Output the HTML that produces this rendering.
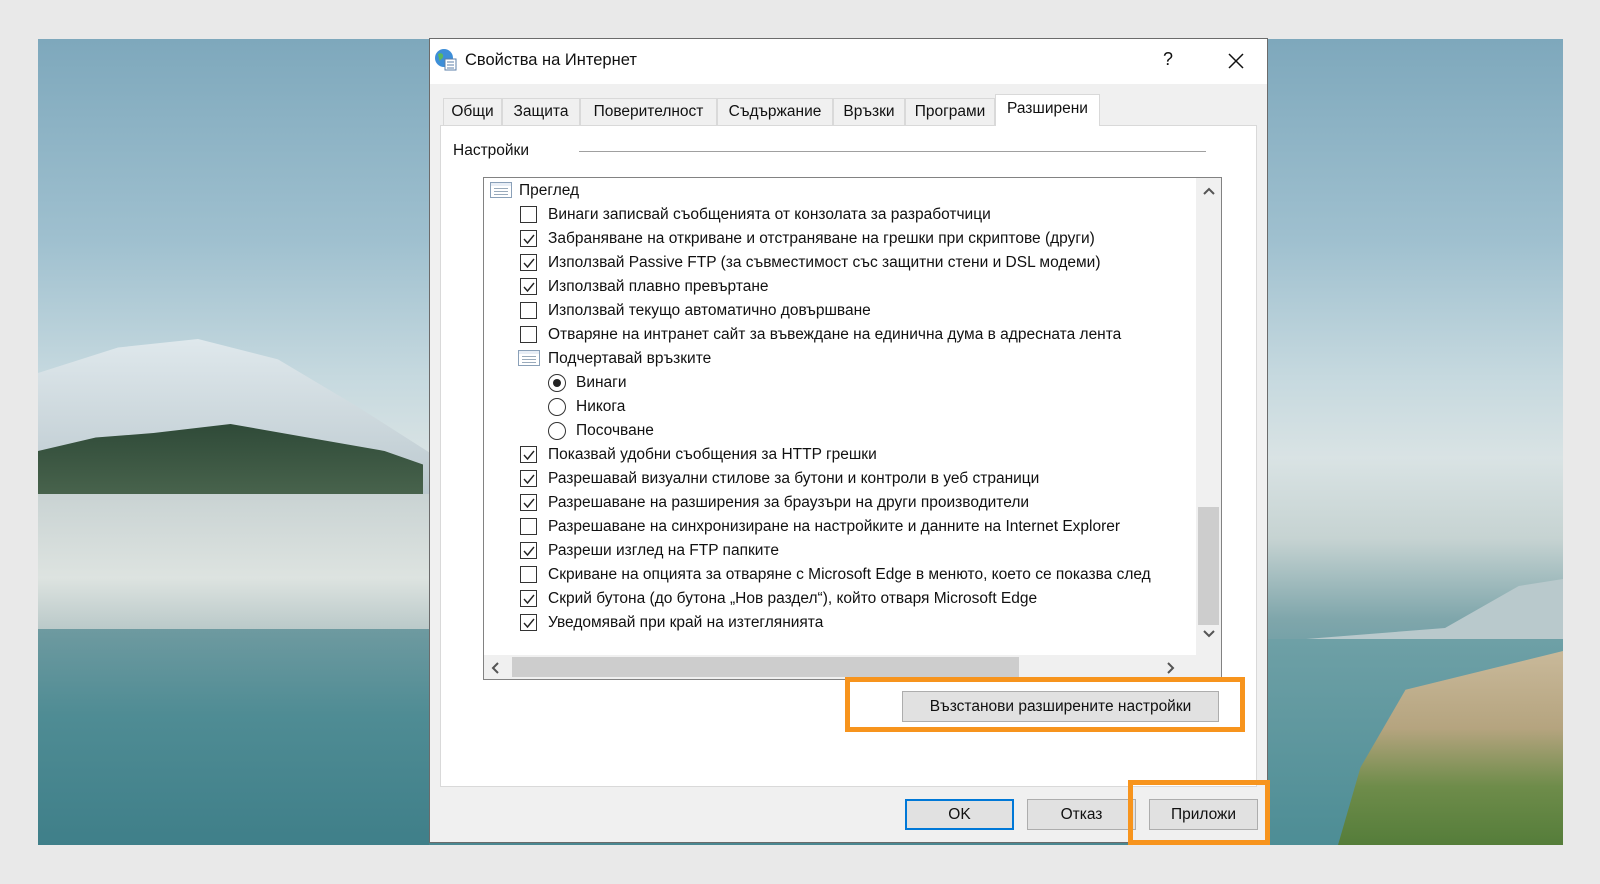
<!DOCTYPE html>
<html><head><meta charset="utf-8"><style>
*{box-sizing:border-box;margin:0;padding:0}
body{width:1600px;height:884px;background:#e9e9e9;position:relative;overflow:hidden;font-family:"Liberation Sans","DejaVu Sans",sans-serif;font-size:15.5px;color:#111}
.abs{position:absolute}
.bg{left:38px;top:39px;width:1525px;height:806px;overflow:hidden;
background:linear-gradient(180deg,#7ea8bc 0%,#9fc0cf 25%,#c6d9df 42%,#d9e3e4 52%,#c6d3d2 62%,#7fa6ab 72%,#5d969f 82%,#4a8791 100%)}
.dlg{left:429px;top:38px;width:839px;height:805px;background:#f0f0f0;border:1px solid #6b6b6b}
.title{left:0;top:0;width:837px;height:45px;background:#fff}
.tab{position:absolute;top:59px;height:27px;border:1px solid #d9d9d9;border-bottom:none;background:#f0f0f0;padding:4px 0 0;text-align:center;font-size:15.5px}
.panel{left:10px;top:86px;width:817px;height:662px;background:#fff;border:1px solid #d9d9d9}
.lb{left:42px;top:51px;width:739px;height:503px;border:1px solid #828282;background:#fff;overflow:hidden}
.row{position:absolute;height:24px;line-height:24px;white-space:nowrap}
.cb{position:absolute;width:17px;height:17px;border:1px solid #333;background:#fff}
.cb svg{position:absolute;left:1px;top:1px}
.rd{position:absolute;width:18px;height:18px;border:1px solid #333;border-radius:50%;background:#fff}
.ic{position:absolute;width:22px;height:16px;border:1px solid #8aa0b8;background:linear-gradient(#e8eef6 0 3px,#fff 3px);}
.ic i{position:absolute;left:3px;right:3px;height:1px;background:#9ab}
.btn{position:absolute;height:31px;border:1px solid #adadad;background:#e1e1e1;text-align:center;line-height:29px;font-size:15.5px}
.or{position:absolute;border:5px solid #f7941d}
</style></head><body>
<div class="abs bg">
 <div class="abs" style="left:0;top:300px;width:400px;height:170px;background:linear-gradient(180deg,#dfe8ec,#b8c6cc);clip-path:polygon(0 20%,20% 5%,40% 0,60% 12%,80% 40%,100% 70%,100% 100%,0 100%)"></div>
 <div class="abs" style="left:0;top:385px;width:385px;height:90px;background:linear-gradient(180deg,#2f4a38,#4f6a52);clip-path:polygon(0 30%,15% 15%,30% 10%,50% 0,70% 15%,90% 30%,100% 45%,100% 100%,0 100%)"></div>
 <div class="abs" style="left:0;top:455px;width:391px;height:140px;background:linear-gradient(180deg,#c9d3d3,#dde3e0 60%,#b7c7c7)"></div>
 <div class="abs" style="left:0;top:590px;width:391px;height:216px;background:linear-gradient(180deg,#6e9aa0,#4f8c94 40%,#3f7f89)"></div>
 <div class="abs" style="left:1230px;top:540px;width:295px;height:70px;background:#b9c9cc;clip-path:polygon(0 90%,60% 70%,85% 10%,100% 0,100% 100%,0 100%)"></div>
 <div class="abs" style="left:1230px;top:600px;width:295px;height:206px;background:linear-gradient(180deg,#6ea0a6,#4d8d95)"></div>
 <div class="abs" style="left:1300px;top:612px;width:225px;height:194px;background:linear-gradient(180deg,#c9b99a,#b5a47f 40%,#6e8c4a 70%,#557d3a);clip-path:polygon(30% 20%,100% 0,100% 100%,0 100%,10% 60%)"></div>
</div>
<div class="abs dlg">
 <div class="abs title">
  <svg class="abs" style="left:4px;top:9px" width="24" height="24" viewBox="0 0 24 24"><circle cx="10" cy="10" r="9" fill="#3d8ed8"/><path d="M4 6c3-2 6 0 5 3s-4 2-3 6" fill="#5cb85c"/><rect x="11" y="11" width="11" height="11" fill="#fff" stroke="#5b7fa8"/><path d="M13 14h7M13 17h7M13 20h7" stroke="#5b7fa8"/></svg>
  <div class="abs" style="left:35px;top:12px;font-size:16.5px">Свойства на Интернет</div>
  <div class="abs" style="left:733px;top:10px;font-size:18px">?</div>
  <svg class="abs" style="left:798px;top:14px" width="16" height="16"><path d="M1 1L15 15M15 1L1 15" stroke="#111" stroke-width="1.5"/></svg>
 </div>
 <div class="tab" style="left:13px;width:59px">Общи</div>
 <div class="tab" style="left:72px;width:78px">Защита</div>
 <div class="tab" style="left:150px;width:137px">Поверителност</div>
 <div class="tab" style="left:287px;width:116px">Съдържание</div>
 <div class="tab" style="left:403px;width:72px">Връзки</div>
 <div class="tab" style="left:475px;width:90px">Програми</div>
 <div class="abs panel">
  <div class="abs" style="left:12px;top:16px">Настройки</div>
  <div class="abs" style="left:138px;top:25px;width:627px;height:1px;background:#a0a0a0"></div>
  <div class="abs lb">
   <div class="ic" style="left:6px;top:4px"><i style="top:5px"></i><i style="top:8px"></i><i style="top:11px"></i></div>
   <div class="row" style="left:35px;top:1px">Преглед</div>
   <div class="cb" style="left:36px;top:28px"></div><div class="row" style="left:64px;top:25px">Винаги записвай съобщенията от конзолата за разработчици</div>
   <div class="cb" style="left:36px;top:52px"><svg width="14" height="14"><path d="M2 7l3.5 4L12 3" stroke="#222" fill="none" stroke-width="1.4"/></svg></div><div class="row" style="left:64px;top:49px">Забраняване на откриване и отстраняване на грешки при скриптове (други)</div>
   <div class="cb" style="left:36px;top:76px"><svg width="14" height="14"><path d="M2 7l3.5 4L12 3" stroke="#222" fill="none" stroke-width="1.4"/></svg></div><div class="row" style="left:64px;top:73px">Използвай Passive FTP (за съвместимост със защитни стени и DSL модеми)</div>
   <div class="cb" style="left:36px;top:100px"><svg width="14" height="14"><path d="M2 7l3.5 4L12 3" stroke="#222" fill="none" stroke-width="1.4"/></svg></div><div class="row" style="left:64px;top:97px">Използвай плавно превъртане</div>
   <div class="cb" style="left:36px;top:124px"></div><div class="row" style="left:64px;top:121px">Използвай текущо автоматично довършване</div>
   <div class="cb" style="left:36px;top:148px"></div><div class="row" style="left:64px;top:145px">Отваряне на интранет сайт за въвеждане на единична дума в адресната лента</div>
   <div class="ic" style="left:34px;top:172px"><i style="top:5px"></i><i style="top:8px"></i><i style="top:11px"></i></div>
   <div class="row" style="left:64px;top:169px">Подчертавай връзките</div>
   <div class="rd" style="left:64px;top:196px"><div class="abs" style="left:4px;top:4px;width:8px;height:8px;border-radius:50%;background:#222"></div></div><div class="row" style="left:92px;top:193px">Винаги</div>
   <div class="rd" style="left:64px;top:220px"></div><div class="row" style="left:92px;top:217px">Никога</div>
   <div class="rd" style="left:64px;top:244px"></div><div class="row" style="left:92px;top:241px">Посочване</div>
   <div class="cb" style="left:36px;top:268px"><svg width="14" height="14"><path d="M2 7l3.5 4L12 3" stroke="#222" fill="none" stroke-width="1.4"/></svg></div><div class="row" style="left:64px;top:265px">Показвай удобни съобщения за HTTP грешки</div>
   <div class="cb" style="left:36px;top:292px"><svg width="14" height="14"><path d="M2 7l3.5 4L12 3" stroke="#222" fill="none" stroke-width="1.4"/></svg></div><div class="row" style="left:64px;top:289px">Разрешавай визуални стилове за бутони и контроли в уеб страници</div>
   <div class="cb" style="left:36px;top:316px"><svg width="14" height="14"><path d="M2 7l3.5 4L12 3" stroke="#222" fill="none" stroke-width="1.4"/></svg></div><div class="row" style="left:64px;top:313px">Разрешаване на разширения за браузъри на други производители</div>
   <div class="cb" style="left:36px;top:340px"></div><div class="row" style="left:64px;top:337px">Разрешаване на синхронизиране на настройките и данните на Internet Explorer</div>
   <div class="cb" style="left:36px;top:364px"><svg width="14" height="14"><path d="M2 7l3.5 4L12 3" stroke="#222" fill="none" stroke-width="1.4"/></svg></div><div class="row" style="left:64px;top:361px">Разреши изглед на FTP папките</div>
   <div class="cb" style="left:36px;top:388px"></div><div class="row" style="left:64px;top:385px">Скриване на опцията за отваряне с Microsoft Edge в менюто, което се показва след</div>
   <div class="cb" style="left:36px;top:412px"><svg width="14" height="14"><path d="M2 7l3.5 4L12 3" stroke="#222" fill="none" stroke-width="1.4"/></svg></div><div class="row" style="left:64px;top:409px">Скрий бутона (до бутона „Нов раздел“), който отваря Microsoft Edge</div>
   <div class="cb" style="left:36px;top:436px"><svg width="14" height="14"><path d="M2 7l3.5 4L12 3" stroke="#222" fill="none" stroke-width="1.4"/></svg></div><div class="row" style="left:64px;top:433px">Уведомявай при край на изтеглянията</div>
   <div class="abs" style="left:712px;top:0;width:25px;height:477px;background:#f0f0f0"></div>
   <div class="abs" style="left:714px;top:329px;width:21px;height:118px;background:#cdcdcd"></div>
   <svg class="abs" style="left:718px;top:8px" width="14" height="10"><path d="M2 8L7 3L12 8" stroke="#555" stroke-width="2" fill="none"/></svg>
   <svg class="abs" style="left:718px;top:451px" width="14" height="10"><path d="M2 2L7 7L12 2" stroke="#555" stroke-width="2" fill="none"/></svg>
   <div class="abs" style="left:0;top:477px;width:737px;height:24px;background:#f0f0f0"></div>
   <div class="abs" style="left:28px;top:479px;width:507px;height:20px;background:#cdcdcd"></div>
   <svg class="abs" style="left:6px;top:483px" width="10" height="14"><path d="M8 2L3 7L8 12" stroke="#555" stroke-width="2" fill="none"/></svg>
   <svg class="abs" style="left:682px;top:483px" width="10" height="14"><path d="M2 2L7 7L2 12" stroke="#555" stroke-width="2" fill="none"/></svg>
  </div>
 </div>
 <div class="tab" style="left:565px;top:55px;width:105px;height:32px;background:#fff;padding-top:5px">Разширени</div>
 <div class="btn" style="left:472px;top:652px;width:317px">Възстанови разширените настройки</div>
 <div class="btn" style="left:475px;top:760px;width:109px;border:2px solid #0078d7;line-height:27px">OK</div>
 <div class="btn" style="left:597px;top:760px;width:109px">Отказ</div>
 <div class="btn" style="left:719px;top:760px;width:109px">Приложи</div>
</div>
<div class="or" style="left:845px;top:677px;width:400px;height:55px"></div>
<div class="or" style="left:1128px;top:780px;width:142px;height:65px"></div>
</body></html>
